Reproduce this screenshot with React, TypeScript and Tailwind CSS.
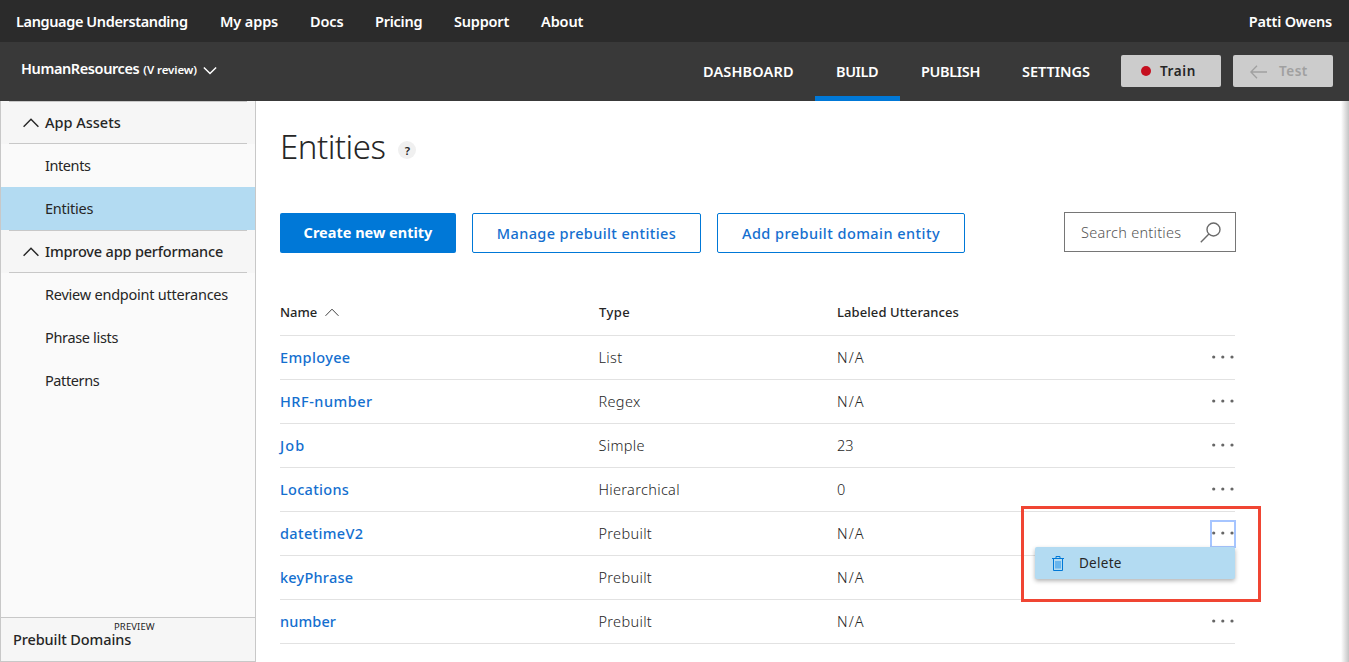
import type { ReactNode } from "react";

function Chevron({ className, down = false }: { className: string; down?: boolean }) {
  return (
    <svg viewBox="0 0 16 10" fill="none" stroke="currentColor" className={className}>
      <path d={down ? "M1 1.500 8 8.500l7-7" : "M.6 8.800 8 1.200l7.400 7.600"} />
    </svg>
  );
}

function Dots() {
  return (
    <svg width="22" height="4" viewBox="0 0 22 4" fill="#666">
      <circle cx="1.700" cy="2" r="1.600" />
      <circle cx="10.800" cy="2" r="1.600" />
      <circle cx="20" cy="2" r="1.600" />
    </svg>
  );
}

const topLinks = [
  { label: "Language Understanding", className: "w-[204px] tracking-[-0.38px]" },
  { label: "My apps", className: "w-[90px] tracking-[-0.12px]" },
  { label: "Docs", className: "w-[65px] tracking-[-0.15px]" },
  { label: "Pricing", className: "w-[79px] tracking-[-0.25px]" },
  { label: "Support", className: "w-[87px] tracking-[-0.2px]" },
  { label: "About", className: "tracking-[-0.1px]" },
];

const tabs = [
  { label: "DASHBOARD", className: "w-[133px] border-transparent tracking-[0.15px]" },
  { label: "BUILD", className: "w-[85px] border-[#0078d7] tracking-[-0.4px]" },
  { label: "PUBLISH", className: "w-[101px] border-transparent tracking-[-0.35px]" },
  { label: "SETTINGS", className: "w-[110px] border-transparent tracking-[-0.03px]" },
];

function SideHeader({ children }: { children: ReactNode }) {
  return (
    <div className="h-[43px] bg-[#f6f6f6] px-2">
      <div className="flex h-[43px] items-center border-y border-[#c8c8c8] pl-[14px] text-[14.5px] font-medium">
        <Chevron className="mr-[6px] h-[10px] w-4 stroke-[1.4]" />
        {children}
      </div>
    </div>
  );
}

function SideItem({ label, active = false, className }: { label: string; active?: boolean; className: string }) {
  return (
    <div className={active ? "bg-[#b3dbf2]" : ""}>
      <div className={`flex h-[43px] items-center pl-11 text-[14.5px] ${className}`}>{label}</div>
    </div>
  );
}

const rows = [
  { name: "Employee", type: "List", count: "N/A", className: "tracking-[0.37px]" },
  { name: "HRF-number", type: "Regex", count: "N/A", className: "tracking-[0.5px]" },
  { name: "Job", type: "Simple", count: "23", className: "tracking-[1.1px]" },
  { name: "Locations", type: "Hierarchical", count: "0", className: "tracking-[0.3px]" },
  { name: "datetimeV2", type: "Prebuilt", count: "N/A", className: "tracking-[0.35px]", open: true },
  { name: "keyPhrase", type: "Prebuilt", count: "N/A", className: "tracking-[0.22px]", hidden: true },
  { name: "number", type: "Prebuilt", count: "N/A", className: "tracking-[0.12px]" },
];

function DeleteMenu() {
  return (
    <>
      <div className="absolute -top-[6px] right-[-26px] z-10 h-24 w-60 border-[3px] border-[#f04533]" />
      <div className="absolute top-[35px] right-0 z-10 flex h-8 w-[200px] items-center rounded-[2px] bg-[#b3dbf2] pl-[17px] text-[13.500px] tracking-[0.27px] shadow-[0_2px_4px_rgba(0,0,0,0.3)]">
        <svg width="12" height="15" viewBox="0 0 12 15" fill="none" stroke="#0078d7" className="mr-[15px]">
          <path d="M0 2.500h12M4 2V.5h4V2M1.500 2.500v12h9v-12" />
          <path d="M4 5v7.500M6 5v7.500M8 5v7.500" stroke="#1e90e8" />
        </svg>
        Delete
      </div>
    </>
  );
}

export default function App() {
  return (
    <div className="flex h-[662px] w-[1349px] flex-col overflow-hidden bg-white font-['Noto_Sans',sans-serif] text-[#262626]">
      <header className="flex h-[42px] shrink-0 items-center bg-[#2b2b2b] pt-px pr-[17px] pl-4 text-[14.5px] font-semibold text-white">
        {topLinks.map((l) => (
          <a key={l.label} className={`whitespace-nowrap ${l.className}`}>{l.label}</a>
        ))}
        <span className="ml-auto tracking-[-0.2px]">Patti Owens</span>
      </header>

      <div className="flex h-[59px] shrink-0 bg-[#393939] text-white">
        <div className="flex h-[54px] w-[682px] items-center pl-[21px] font-semibold">
          <span className="text-[14.5px] tracking-[-0.4px]">HumanResources</span>
          <span className="ml-[4px] pt-px text-[11.500px] tracking-[-0.1px]">(V review)</span>
          <Chevron down className="mt-[2px] ml-[6px] h-[9px] w-[14px] stroke-[1.7]" />
        </div>
        <nav className="flex text-[14.5px] font-semibold">
          {tabs.map((t) => (
            <a key={t.label} className={`flex items-center border-b-[5px] pt-[6px] pl-[21px] ${t.className}`}>{t.label}</a>
          ))}
        </nav>
        <div className="flex gap-3 pt-[13px] pl-[10px] text-[13.500px] font-semibold">
          <button className="flex h-8 w-[100px] items-center rounded-[2px] bg-[#ccc] pl-5 tracking-[0.6px] text-[#262626]">
            <span className="mr-[9px] size-[10px] rounded-full bg-[#c50f1f]" />
            Train
          </button>
          <button className="flex h-8 w-[100px] items-center rounded-[2px] bg-[#ccc] pl-[17px] tracking-[0.5px] text-[#a0a0a0]">
            <svg width="17" height="14" viewBox="0 0 17 14" fill="none" stroke="currentColor" strokeWidth="1.300" className="mt-px mr-3">
              <path d="M17 7H1M7 .8.900 7 7 13.200" />
            </svg>
            Test
          </button>
        </div>
      </div>

      <div className="flex h-[561px]">
        <aside className="flex w-64 flex-col border border-t-0 border-[#c8c8c8] bg-[#fafafa]">
          <SideHeader>App Assets</SideHeader>
          <SideItem label="Intents" className="tracking-[-0.42px]" />
          <SideItem label="Entities" active className="tracking-[-0.25px]" />
          <SideHeader><span className="tracking-[-0.18px]">Improve app performance</span></SideHeader>
          <SideItem label="Review endpoint utterances" className="tracking-[-0.23px]" />
          <SideItem label="Phrase lists" className="tracking-[-0.34px]" />
          <SideItem label="Patterns" className="tracking-[-0.4px]" />
          <div className="mt-auto h-[44px] border-t border-[#c8c8c8] bg-[#f6f6f6] pl-3">
            <div className="pt-1 pl-[101px] text-[9.500px] leading-[10px] tracking-[0.12px]">PREVIEW</div>
            <div className="text-[14.5px] leading-[15px] font-medium tracking-[-0.1px]">Prebuilt Domains</div>
          </div>
        </aside>

        <main className="w-[1079px] pl-6">
          <div className="flex h-[91px] items-center">
            <h1 className="text-[33px] font-light tracking-[-0.5px]">Entities</h1>
            <span className="mt-[7px] ml-[13px] flex size-[18px] items-center justify-center rounded-full bg-[#f0f0f0] pt-px text-[11.500px] font-semibold">?</span>
          </div>

          <div className="flex h-[60px] pt-5 text-[14.5px]">
            <button className="mt-px mr-4 h-10 w-44 shrink-0 rounded-[2px] bg-[#0078d7] pb-px font-bold text-white">Create new entity</button>
            <button className="mt-px mr-4 h-10 w-[229px] shrink-0 rounded-[2px] border border-[#0078d7] pt-px font-medium tracking-[0.38px] text-[#146fcf]">Manage prebuilt entities</button>
            <button className="mt-px h-10 w-[248px] shrink-0 rounded-[2px] border border-[#0078d7] pt-px font-medium tracking-[0.45px] text-[#146fcf]">Add prebuilt domain entity</button>
            <div className="ml-[99px] flex h-10 w-[172px] items-center justify-between border border-[#767676] pr-[14px] pl-4 font-light text-[#555]">
              <span className="pt-px tracking-[0.25px]">Search entities</span>
              <svg width="21" height="21" viewBox="0 0 21 21" fill="none" stroke="#6a6a6a" strokeWidth="1.400" className="mt-px">
                <circle cx="13.500" cy="7.500" r="6.500" />
                <path d="M8.900 12.100.8 20.200" />
              </svg>
            </div>
          </div>

          <div className="w-[955px]">
            <div className="flex h-[84px] items-end border-b border-[#e2e2e2] pb-[13px] text-[13px] font-medium">
              <div className="flex w-[318px] items-center tracking-normal">
                Name
                <Chevron className="ml-2 h-[9px] w-[14px]" />
              </div>
              <div className="w-[239px] pl-px tracking-[0.4px]">Type</div>
              <div className="tracking-[0.09px]">Labeled Utterances</div>
            </div>
            {rows.map((r) => (
              <div key={r.name} className="relative flex h-11 items-center border-b border-[#e2e2e2] text-[14.5px]">
                <a className={`w-[318px] font-medium text-[#146fcf] ${r.className}`}>{r.name}</a>
                <span className="w-[239px] pl-[0.5px] font-light tracking-[0.33px]">{r.type}</span>
                <span className={r.count === "N/A" ? "font-light tracking-[1.1px]" : "font-light"}>{r.count}</span>
                {!r.hidden && (
                  <button
                    className={
                      r.open
                        ? "-mr-px ml-auto flex h-7 w-[26px] items-center justify-center border-2 border-[#a6c5ff] pb-px"
                        : "-mr-px ml-auto flex h-7 w-[26px] items-center justify-center pb-px"
                    }
                  >
                    <span className="shrink-0"><Dots /></span>
                  </button>
                )}
                {r.open && <DeleteMenu />}
              </div>
            ))}
          </div>
        </main>
        <div className="ml-auto w-2 bg-linear-to-l from-[#c4c4c4] to-white" />
      </div>
    </div>
  );
}
